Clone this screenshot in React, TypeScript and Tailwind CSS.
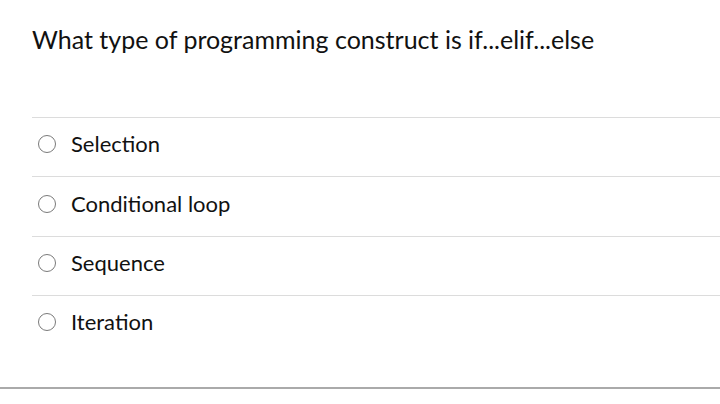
const options = ['Selection', 'Conditional loop', 'Sequence', 'Iteration'];

export default function App() {
  return (
    <div className="w-[720px] h-[404px] bg-white font-['Lato',sans-serif] text-[#111] overflow-hidden">
      <div className="pl-[32px] pt-[21px] h-[117px]">
        <h1 className="text-[25px] leading-[36px]">What type of programming construct is if...elif...else</h1>
      </div>
      <div className="ml-[32px]">
        {options.map((opt) => (
          <div key={opt} className="h-[59.4px] pb-[6px] border-t border-[#dcdcdc] flex items-center">
            <span className="ml-[6px] w-[18px] h-[18px] rounded-full border-[1.5px] border-[#7a7a7a] shrink-0" />
            <span className="ml-[15px] text-[22px] leading-[28px]">{opt}</span>
          </div>
        ))}
      </div>
      <div className="mt-[32px] border-t-2 border-[#aaaaaa]" />
    </div>
  );
}
